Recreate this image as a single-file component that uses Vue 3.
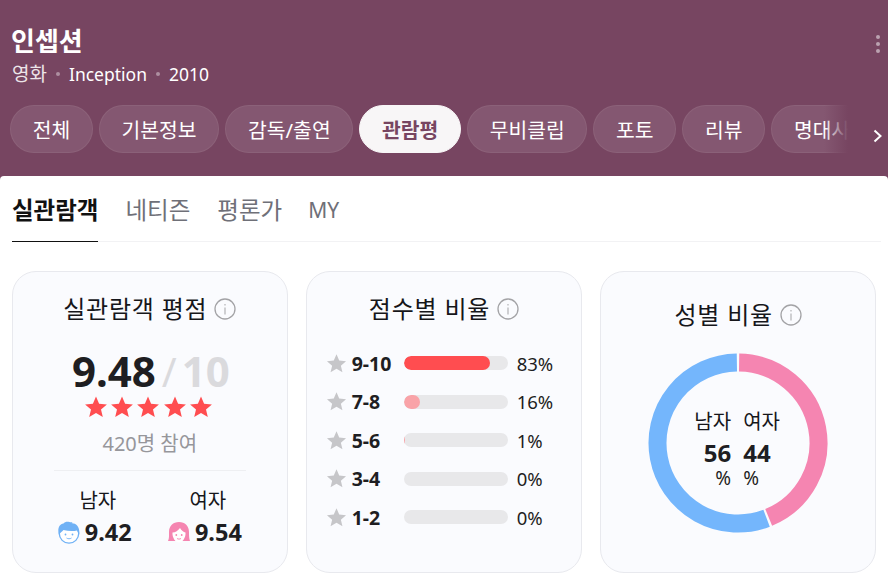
<script setup>
const pills = [
  { label: "전체" },
  { label: "기본정보" },
  { label: "감독/출연" },
  { label: "관람평", active: true },
  { label: "무비클립" },
  { label: "포토" },
  { label: "리뷰" },
  { label: "명대사" },
];

const rows = [
  { label: "9-10", value: 83, color: "#ff4d50" },
  { label: "7-8", value: 16, color: "#f9a3a8" },
  { label: "5-6", value: 1, color: "#f9a3a8" },
  { label: "3-4", value: 0, color: "#f9a3a8" },
  { label: "1-2", value: 0, color: "#f9a3a8" },
];

const starPath =
  "M12 1.5l3.1 7.2 7.8.7-5.9 5.1 1.8 7.6L12 18.1l-6.8 4 1.8-7.6-5.9-5.1 7.8-.7z";

// donut arcs, start angle in degrees clockwise from the top
const radius = 80.5;
function arc(from, to) {
  const pt = (deg) => {
    const a = ((deg - 90) * Math.PI) / 180;
    return `${90 + radius * Math.cos(a)} ${90 + radius * Math.sin(a)}`;
  };
  const large = to - from > 180 ? 1 : 0;
  return `M${pt(from)}A${radius} ${radius} 0 ${large} 1 ${pt(to)}`;
}
const pinkArc = arc(0.8, 157.6);
const blueArc = arc(159.2, 359.2);
</script>

<template>
  <div class="page">
    <header class="head">
      <div class="head-top">
        <div>
          <h1 class="title">인셉션</h1>
          <p class="sub">
            <span class="kind">영화</span>
            <i class="dot"></i>
            <span>Inception</span>
            <i class="dot"></i>
            <span>2010</span>
          </p>
        </div>
        <div class="more"><i></i><i></i><i></i></div>
      </div>
      <div class="nav">
        <div class="pills">
          <a
            v-for="p in pills"
            :key="p.label"
            class="pill"
            :class="{ active: p.active }"
            >{{ p.label }}</a
          >
          <div class="fade"></div>
        </div>
        <svg class="next" width="12" height="16" viewBox="0 0 12 16">
          <path d="M2.5 2.5L8.5 8l-6 5.500" fill="none" stroke="#fff" stroke-width="2" />
        </svg>
      </div>
    </header>

    <main class="panel">
      <nav class="tabs">
        <a class="tab on">실관람객</a>
        <a class="tab">네티즌</a>
        <a class="tab">평론가</a>
        <a class="tab latin">MY</a>
      </nav>

      <section class="cards">
        <article class="card">
          <h2 class="card-title">
            실관람객 평점
            <svg class="info" width="22" height="22" viewBox="0 0 22 22">
              <circle cx="11" cy="11" r="10" fill="none" stroke="#a3a3a6" stroke-width="1.300" />
              <path d="M11 9.500v7M11 6v1.500" stroke="#a3a3a6" stroke-width="1" />
            </svg>
          </h2>
          <div class="score"><b>9.48</b><i>/</i><span>10</span></div>
          <div class="stars">
            <svg v-for="n in 5" :key="n" width="24" height="24" viewBox="0 0 24 24">
              <path :d="starPath" fill="#ff4d50" />
            </svg>
          </div>
          <p class="count">420명 참여</p>
          <div class="split">
            <div class="who">
              <span class="who-label">남자</span>
              <div class="who-score">
                <svg width="22" height="23" viewBox="0 0 22 23">
                  <circle cx="11" cy="12.500" r="9.700" fill="#fff" stroke="#6fb1f5" stroke-width="1.300" />
                  <path d="M1 14C-.8 8 1 3 5.500 2.500 6.500 1 9 .3 11.500 1c1 .3 2 .2 3 0-.3.7-.6 1-1 1.300 4.500-.5 9 4 7.500 11.700-.6-1.500-1-3-2-4.500-3.500.8-9 .8-13.500-.5C4 10.500 2 12 1 14z" fill="#6fb1f5" />
                  <circle cx="7.500" cy="13.500" r=".9" fill="#6fb1f5" />
                  <circle cx="14.500" cy="13.500" r=".9" fill="#6fb1f5" />
                  <path d="M8.500 17c1.500 1 3.500 1 5 0" fill="none" stroke="#6fb1f5" stroke-width=".9" />
                </svg>
                <b>9.42</b>
              </div>
            </div>
            <div class="who">
              <span class="who-label">여자</span>
              <div class="who-score">
                <svg width="22" height="23" viewBox="0 0 22 23">
                  <path d="M0 20c1.300-2.500 1-5.500 1-9C1 5 5 1 11 1s10 4 10 10c0 3.500 0 6.500 1 9z" fill="#f585b1" />
                  <path d="M4.500 11.500C7.500 11.500 10 9.500 12 7c1.500 2.500 3.500 4 5.500 4.500.5 5-3 10-6.500 10S4 16.500 4.500 11.500z" fill="#fff" />
                  <circle cx="8.300" cy="14" r=".9" fill="#f585b1" />
                  <circle cx="13.700" cy="14" r=".9" fill="#f585b1" />
                  <path d="M9 17.500c1.300.8 2.700.8 4 0" fill="none" stroke="#f585b1" stroke-width=".9" />
                </svg>
                <b>9.54</b>
              </div>
            </div>
          </div>
        </article>

        <article class="card">
          <h2 class="card-title">
            점수별 비율
            <svg class="info" width="22" height="22" viewBox="0 0 22 22">
              <circle cx="11" cy="11" r="10" fill="none" stroke="#a3a3a6" stroke-width="1.300" />
              <path d="M11 9.500v7M11 6v1.500" stroke="#a3a3a6" stroke-width="1" />
            </svg>
          </h2>
          <ul class="rows">
            <li v-for="r in rows" :key="r.label" class="row">
              <svg width="21" height="21" viewBox="0 0 24 24">
                <path :d="starPath" fill="#c6c6c9" />
              </svg>
              <b class="row-label">{{ r.label }}</b>
              <div class="track">
                <div
                  class="fill"
                  :style="{ width: r.value + '%', background: r.color }"
                ></div>
              </div>
              <span class="row-val">{{ r.value }}%</span>
            </li>
          </ul>
        </article>

        <article class="card">
          <h2 class="card-title gender-title">
            성별 비율
            <svg class="info" width="22" height="22" viewBox="0 0 22 22">
              <circle cx="11" cy="11" r="10" fill="none" stroke="#a3a3a6" stroke-width="1.300" />
              <path d="M11 9.500v7M11 6v1.500" stroke="#a3a3a6" stroke-width="1" />
            </svg>
          </h2>
          <div class="donut">
            <svg width="180" height="180" viewBox="0 0 180 180">
              <path :d="blueArc" fill="none" stroke="#74b6fc" stroke-width="18" />
              <path :d="pinkArc" fill="none" stroke="#f585b1" stroke-width="18" />
            </svg>
            <div class="donut-text">
              <div class="col left">
                <span class="who-label">남자</span>
                <b>56</b>
                <span class="pct">%</span>
              </div>
              <div class="col">
                <span class="who-label">여자</span>
                <b>44</b>
                <span class="pct">%</span>
              </div>
            </div>
          </div>
        </article>
      </section>
    </main>
  </div>
</template>

<style>
body {
  background: #fff;
}
</style>

<style scoped>
.page {
  width: 888px;
  height: 582px;
  overflow: hidden;
  background: #774561;
  font-family: "Noto Sans", "Noto Sans CJK KR", sans-serif;
  color: #1e1e22;
}

.head {
  height: 176px;
  box-sizing: border-box;
  padding: 24px 0 0 10px;
  color: #fff;
}

.head-top {
  display: flex;
  justify-content: space-between;
  height: 81px;
}

.title {
  margin: 0 0 0 1px;
  font-size: 26px;
  line-height: 34px;
  font-weight: 700;
}

.sub {
  margin: 0 0 0 2px;
  display: flex;
  align-items: center;
  gap: 9px;
  font-size: 17.500px;
  line-height: 32px;
}

.sub .kind {
  color: #ece4e8;
  font-size: 19px;
}

.dot {
  width: 4px;
  height: 4px;
  border-radius: 50%;
  background: rgba(255, 255, 255, 0.4);
}

.more {
  display: flex;
  flex-direction: column;
  gap: 3px;
  margin: 11px 8px 0 0;
}

.more i {
  width: 4px;
  height: 4px;
  border-radius: 50%;
  background: rgba(255, 255, 255, 0.5);
}

.nav {
  display: flex;
}

.pills {
  position: relative;
  width: 838px;
  display: flex;
  gap: 6px;
  overflow: hidden;
}

.pill {
  flex: none;
  height: 48px;
  box-sizing: border-box;
  padding: 0 21.700px;
  display: flex;
  align-items: center;
  border-radius: 24px;
  border: 1px solid rgba(255, 255, 255, 0.06);
  background: rgba(255, 255, 255, 0.1);
  font-size: 20.400px;
  color: #fff;
}

.pill.active {
  background: #f8f6f7;
  color: #774561;
  font-weight: 700;
  border-color: #f8f6f7;
}

.fade {
  position: absolute;
  right: 0;
  top: 0;
  width: 24px;
  height: 48px;
  background: linear-gradient(to right, rgba(119, 69, 97, 0), #774561);
}

.next {
  margin: 23px 0 0 24px;
}

.panel {
  height: 406px;
  box-sizing: border-box;
  padding: 0 11.500px;
  background: #fff;
  border-radius: 4px 4px 0 0;
}

.tabs {
  display: flex;
  gap: 27px;
  height: 66px;
  box-sizing: border-box;
  margin: 0 -4px 0 0.500px;
  border-bottom: 1px solid #f2f2f4;
}

.tab {
  height: 66px;
  box-sizing: border-box;
  padding-top: 1px;
  line-height: 66px;
  font-size: 23.500px;
  color: #6f7078;
}

.tab.latin {
  font-size: 21px;
  margin-left: -1px;
}

.tab.on {
  font-weight: 700;
  color: #111;
  border-bottom: 1px solid #111;
}

.cards {
  display: grid;
  grid-template-columns: repeat(3, 1fr);
  column-gap: 17.500px;
  margin-top: 29px;
}

.card {
  height: 302px;
  box-sizing: border-box;
  display: flex;
  flex-direction: column;
  align-items: center;
  padding-top: 19px;
  background: #fafbfe;
  border: 1px solid #e8e9ee;
  border-radius: 24px;
}

.card-title {
  margin: 0;
  display: flex;
  align-items: center;
  gap: 7px;
  font-size: 24px;
  line-height: 36px;
  font-weight: 400;
  letter-spacing: 0.800px;
  color: #16161a;
}

.gender-title {
  margin-top: 6px;
}

.score {
  margin: 19px 0 0 2px;
  display: flex;
  align-items: baseline;
  font-size: 42px;
  line-height: 50px;
}

.score i {
  font-style: normal;
  color: #dadadd;
  font-size: 40px;
  margin: 0 5px 0 6px;
}

.score span {
  font-weight: 700;
  color: #dadadd;
  font-size: 42px;
}

.stars {
  display: flex;
  gap: 2.200px;
  height: 24px;
  margin: -2px 3px 0 0;
}

.count {
  margin: 11px 0 0;
  font-size: 20px;
  line-height: 28px;
  color: #96969b;
}

.split {
  width: 192px;
  box-sizing: border-box;
  margin-top: 12px;
  padding: 15px 4px 0;
  border-top: 1px solid #eeeff2;
  display: flex;
  justify-content: space-between;
}

.who {
  display: flex;
  flex-direction: column;
  align-items: center;
}

.who > .who-label {
  margin-left: 6px;
}

.who-label {
  font-size: 20px;
  line-height: 30px;
  color: #16161a;
}

.who-score {
  display: flex;
  align-items: center;
  gap: 5px;
  font-size: 23.500px;
  line-height: 32px;
}

.rows {
  list-style: none;
  margin: 17px 0 0;
  padding: 0 0 0 19px;
  width: 100%;
  box-sizing: border-box;
}

.row {
  display: flex;
  align-items: center;
  height: 38.500px;
}

.row-label {
  width: 52px;
  margin-left: 5px;
  font-size: 19.500px;
}

.track {
  width: 104px;
  height: 14px;
  border-radius: 7px;
  background: #e8e8ea;
  overflow: hidden;
}

.fill {
  height: 100%;
  border-radius: 7px;
}

.row-val {
  margin-left: 9px;
  font-size: 18.500px;
}

.donut {
  position: relative;
  width: 180px;
  height: 180px;
  margin-top: 19.500px;
}

.donut-text {
  position: absolute;
  inset: 0;
  display: flex;
  justify-content: center;
  gap: 12px;
  padding: 54px 2px 0 0;
  box-sizing: border-box;
}

.col {
  width: 40px;
  display: flex;
  flex-direction: column;
  align-items: flex-start;
  font-size: 18px;
}

.col.left {
  align-items: flex-end;
}

.col b {
  font-size: 24px;
  line-height: 32px;
}

.pct {
  font-size: 19px;
  line-height: 18px;
}
</style>
